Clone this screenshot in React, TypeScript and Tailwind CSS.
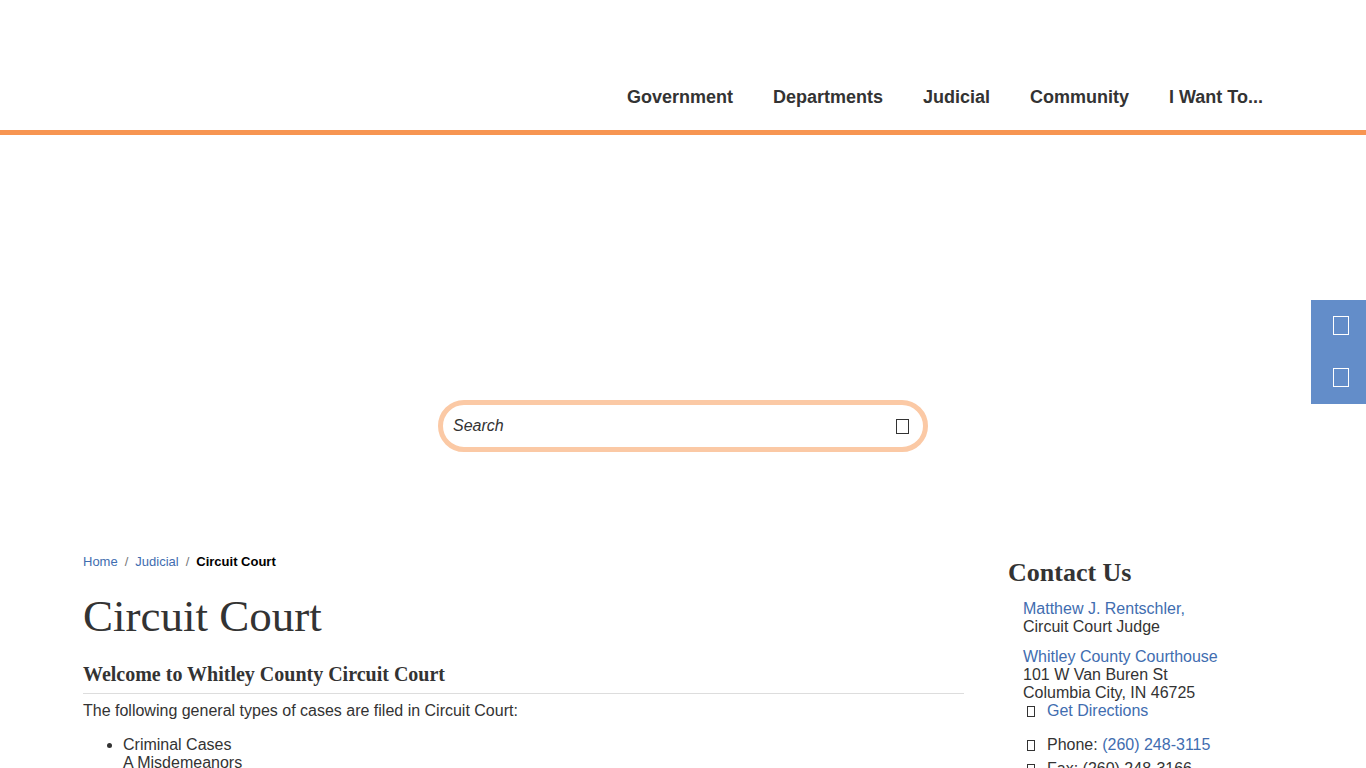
import type { ReactNode } from 'react';

const NAV_ITEMS = ['Government', 'Departments', 'Judicial', 'Community', 'I Want To...'];

function BoxGlyph({ className }: { className: string }) {
  return (
    <svg fill="none" stroke="currentColor" shapeRendering="crispEdges" aria-hidden="true" className={className}>
      <rect width="100%" height="100%" strokeWidth="2" />
    </svg>
  );
}

function TextLink({ children }: { children: ReactNode }) {
  return (
    <a href="#" className="text-[#416db0] hover:underline">
      {children}
    </a>
  );
}

function ContactRow({ children }: { children: ReactNode }) {
  return (
    <div className="flex items-center">
      <BoxGlyph className="ml-1 mr-3 h-[11px] w-2" />
      <span>{children}</span>
    </div>
  );
}

function Header() {
  return (
    <header className="border-b-[5px] border-[#f79552] pt-16">
      <nav aria-label="Main" className="mx-auto flex h-[66px] max-w-[1200px] items-center justify-end gap-10 px-5">
        {NAV_ITEMS.map((item) => (
          <a key={item} href="#" className="text-lg font-bold">
            {item}
          </a>
        ))}
      </nav>
    </header>
  );
}

function SearchBanner() {
  return (
    <section className="px-4 pt-[265px] pb-[101px]">
      <form
        role="search"
        className="mx-auto flex h-[52px] max-w-[490px] items-center rounded-full border-[5px] border-[#fbc9a5] bg-white pl-2.5 pr-[14px]"
        onSubmit={(e) => e.preventDefault()}
      >
        <input
          type="text"
          aria-label="Search"
          placeholder="Search"
          className="min-w-0 flex-1 bg-transparent italic outline-none placeholder:text-[#333333] placeholder:opacity-100"
        />
        <button type="submit" aria-label="Submit search">
          <BoxGlyph className="h-[15px] w-[13px]" />
        </button>
      </form>
    </section>
  );
}

function SideTools() {
  return (
    <div className="fixed top-[300px] right-0 flex flex-col bg-[#638dc9] text-white">
      {['Share', 'Translate'].map((label) => (
        <button key={label} type="button" aria-label={label} className="flex h-[52px] w-[55px] items-center justify-center pb-0.5 pl-[5px]">
          <BoxGlyph className="h-[19px] w-4" />
        </button>
      ))}
    </div>
  );
}

function Article() {
  return (
    <main className="min-w-0 flex-1">
      <nav aria-label="Breadcrumb" className="flex gap-[7px] text-[13px] leading-[18px]">
        <TextLink>Home</TextLink>
        <span className="text-[#777777]">/</span>
        <TextLink>Judicial</TextLink>
        <span className="text-[#777777]">/</span>
        <span className="font-bold text-black">Circuit Court</span>
      </nav>
      <h1 className="mt-5 font-['Liberation_Serif',serif] text-[45px] leading-[50px]">Circuit Court</h1>
      <h2 className="mt-5 border-b border-[#dddddd] pb-1.5 font-['Liberation_Serif',serif] text-xl leading-[26px] font-bold">
        Welcome to Whitley County Circuit Court
      </h2>
      <p className="mt-2">The following general types of cases are filed in Circuit Court:</p>
      <ul className="mt-4 list-disc pl-10">
        <li>
          Criminal Cases
          <br />
          A Misdemeanors
        </li>
      </ul>
    </main>
  );
}

function ContactPanel() {
  return (
    <aside className="w-[275px] shrink-0 pt-1">
      <h2 className="font-['Liberation_Serif',serif] text-[26px] leading-8 font-bold">Contact Us</h2>
      <div className="mt-[11px] flex flex-col gap-3 pl-[15px]">
        <p>
          <TextLink>Matthew J. Rentschler,</TextLink>
          <br />
          Circuit Court Judge
        </p>
        <div>
          <TextLink>Whitley County Courthouse</TextLink>
          <br />
          101 W Van Buren St
          <br />
          Columbia City, IN 46725
          <ContactRow>
            <TextLink>Get Directions</TextLink>
          </ContactRow>
        </div>
        <div className="mt-1 flex flex-col gap-1.5">
          <ContactRow>
            Phone: <TextLink>(260) 248-3115</TextLink>
          </ContactRow>
          <ContactRow>Fax: (260) 248-3166</ContactRow>
        </div>
      </div>
    </aside>
  );
}

export default function App() {
  return (
    <div className="h-screen overflow-hidden bg-white font-['Liberation_Sans',Arial,sans-serif] text-base leading-[18px] text-[#333333]">
      <Header />
      <SearchBanner />
      <div className="mx-auto flex max-w-[1200px] gap-11">
        <Article />
        <ContactPanel />
      </div>
      <SideTools />
    </div>
  );
}
